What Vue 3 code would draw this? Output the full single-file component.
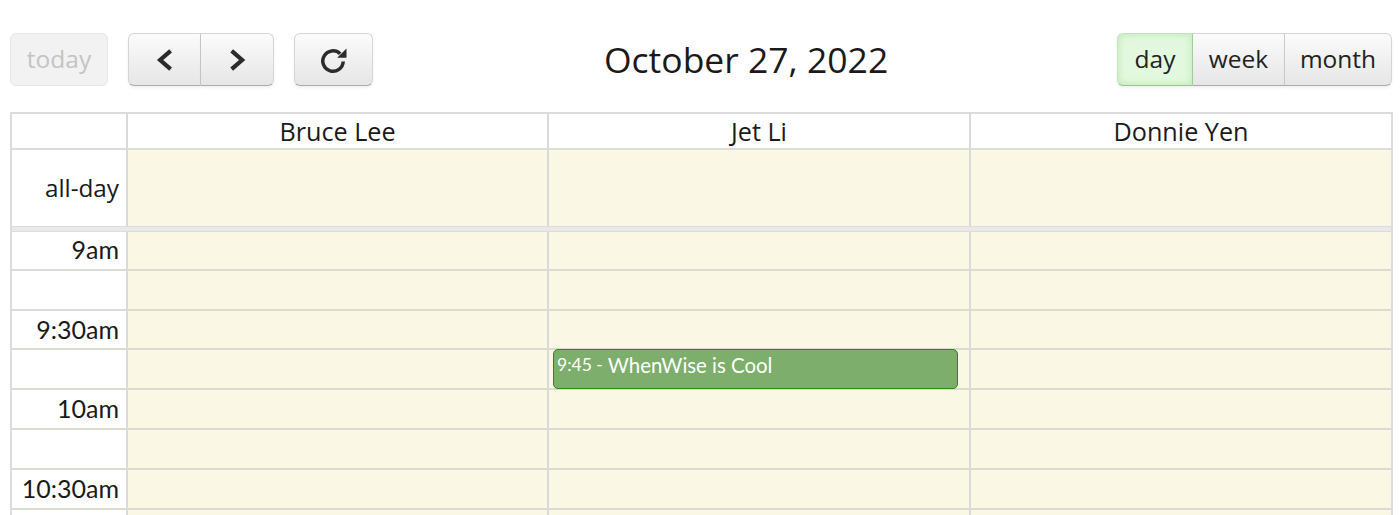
<script setup>
const resources = ['Bruce Lee', 'Jet Li', 'Donnie Yen']
const slots = ['9am', '', '9:30am', '', '10am', '', '10:30am', '']
</script>

<template>
  <div class="page">
    <header class="toolbar">
      <div class="left">
        <button class="btn today">today</button>
        <div class="group nav">
          <button class="btn arrow">
            <svg width="20" height="24" viewBox="0 0 20 24"><path d="M15.600 2.800 5.100 12l10.500 9.200" fill="none" stroke="#2b2b2b" stroke-width="4.200"/></svg>
          </button>
          <button class="btn arrow">
            <svg width="20" height="24" viewBox="0 0 20 24"><path d="M4.650 2.800 15.150 12 4.650 21.200" fill="none" stroke="#2b2b2b" stroke-width="4.200"/></svg>
          </button>
        </div>
        <button class="btn refresh">
          <svg width="28" height="28" viewBox="0 0 28 28">
            <path d="M20.200 7.800A10.200 10.200 0 1 0 23.200 15.500" fill="none" stroke="#2b2b2b" stroke-width="3.500"/>
            <path d="M26.500 2.500V11.800H17.200z" fill="#2b2b2b"/>
          </svg>
        </button>
      </div>
      <h2 class="title">October 27, 2022</h2>
      <div class="group views">
        <button class="btn view active">day</button>
        <button class="btn view week">week</button>
        <button class="btn view month">month</button>
      </div>
    </header>

    <section class="calendar">
      <div class="row head">
        <div class="axis"></div>
        <div v-for="r in resources" :key="r" class="cell name">{{ r }}</div>
      </div>
      <div class="row allday">
        <div class="axis label">all-day</div>
        <div v-for="r in resources" :key="r" class="cell day"></div>
      </div>
      <div class="divider"></div>
      <div class="slots">
        <div v-for="(s, i) in slots" :key="i" class="row slot">
          <div class="axis label">{{ s }}</div>
          <div v-for="r in resources" :key="r" class="cell day"></div>
        </div>
        <div class="event"><span class="time">9:45 -</span> WhenWise is Cool</div>
      </div>
    </section>
  </div>
</template>

<style scoped>
.page {
  height: 515px;
  overflow: hidden;
  background: #fff;
  padding: 33px 0 0 10px;
  box-sizing: border-box;
  font-family: "Open Sans", "Noto Sans", sans-serif;
  color: #1a1a1a;
}
.toolbar {
  width: 1382px;
  height: 53px;
  display: flex;
  align-items: flex-start;
  justify-content: space-between;
  position: relative;
}
.left { display: flex; gap: 20px; }
.btn {
  height: 53px;
  box-sizing: border-box;
  border: 1px solid #d5d5d5;
  border-bottom-color: #aaa;
  border-radius: 6px;
  background: linear-gradient(#fbfbfb, #e6e6e6);
  font: 400 24.5px "Open Sans", sans-serif;
  color: #222;
  padding: 0 0 3px;
  display: flex;
  align-items: center;
  justify-content: center;
  box-shadow: 0 2px 3px rgba(0, 0, 0, .06);
}
.today {
  width: 98px;
  background: #f2f2f2;
  color: #c4c4c4;
  border-color: #e6e6e6;
  box-shadow: none;
}
.refresh { width: 79px; padding: 0; }
.group { display: flex; }
.group .btn { border-radius: 0; }
.group .btn:first-child { border-radius: 6px 0 0 6px; }
.group .btn:last-child { border-radius: 0 6px 6px 0; border-left: 0; }
.arrow { width: 73px; padding: 0; }
.arrow svg { display: block; }
.nav .btn:first-child { border-right: 1px solid #c8c8c8; }
.title {
  position: absolute;
  left: 594px;
  top: 3px;
  margin: 0;
  font: 400 35.5px/46px "Open Sans", sans-serif;
  color: #1a1a1a;
  white-space: nowrap;
}
.views .btn.week { border-left: 0; border-right: 1px solid #cfcfcf; width: 92px; }
.views .btn.active {
  width: 76px;
  background: #e3f9df;
  box-shadow: inset 0 0 9px rgba(110, 200, 100, .35), 0 2px 3px rgba(0, 0, 0, .06);
  border-color: #c4e3bd;
  border-right-color: #a6cfa0;
  border-bottom-color: #9ac293;
}
.views .btn.month { width: 107px; }
.calendar {
  margin-top: 26px;
  width: 1383px;
  border-top: 2px solid #dcdcdc;
  border-left: 2px solid #dcdcdc;
  border-right: 2px solid #dcdcdc;
  box-sizing: border-box;
}
.row {
  display: grid;
  grid-template-columns: 114px 421px 422px 1fr;
}
.row > * { box-sizing: border-box; }
.row > .cell { border-left: 2px solid #dadada; }
.head { height: 34px; border-bottom: 2px solid #dcdcdc; box-sizing: content-box; }
.name {
  font: 400 25.200px/34px "Open Sans", sans-serif;
  text-align: center;
  color: #1a1a1a;
}
.allday { height: 76px; }
.day { background: #faf7e5; }
.label {
  font: 400 25px/36px Lato, sans-serif;
  text-align: right;
  padding-right: 7px;
  color: #1a1a1a;
}
.allday .label { line-height: 76px; font-family: "Open Sans", sans-serif; font-size: 24.300px; }
.divider { height: 6px; background: #e9e9e9; border-top: 1px solid #dcdcdc; border-bottom: 1px solid #dcdcdc; box-sizing: border-box; }
.slots { position: relative; }
.slot { height: 39.800px; border-bottom: 2px solid #dcdbd2; box-sizing: border-box; }
.slot:first-child { height: 38.800px; }
.slot:first-child .label { line-height: 34px; }
.event {
  position: absolute;
  left: 541px;
  top: 117px;
  width: 405px;
  height: 40px;
  box-sizing: border-box;
  background: #7dae6c;
  border: 1px solid #2a8a14;
  border-radius: 5px;
  color: #fff;
  font: 400 20.400px/26px Lato, sans-serif;
  padding: 2px 0 0 3px;
  white-space: nowrap;
}
.time { font-size: 17.500px; vertical-align: 2px; }
</style>
